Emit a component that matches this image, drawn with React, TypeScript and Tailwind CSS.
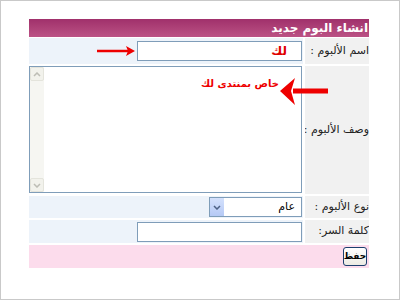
export default function App() {
  const label = "flex items-center justify-start bg-[#f1f1f1] text-[11px] text-[#222] whitespace-nowrap overflow-hidden";
  const field = "flex items-center bg-[#edf3fa] pr-[1px]";
  return (
    <div className="relative h-[300px] w-[400px] overflow-hidden border border-[#c9c9c9] bg-white font-['DejaVu_Sans',sans-serif]">
      <div dir="rtl" className="ml-[28px] mt-[18px] flex w-[340px] flex-col">
        <div className="flex h-[18px] items-center bg-gradient-to-b from-[#a0306b] to-[#bb5285] pr-[1px] text-[12px] font-bold text-white">
          انشاء البوم جديد
        </div>
        <div className="mt-[1px] grid grid-cols-[64px_1fr] gap-x-[2px] gap-y-[2px]">
          <div className={`${label} h-[26px]`}>اسم الألبوم :</div>
          <div className={field}>
            <div className="flex h-[20px] w-[165px] items-center border border-[#7f9db9] bg-white pr-[14px] text-[12px] font-bold text-[#e00000]">
              لك
            </div>
          </div>

          <div className={`${label} h-[128px]`}>وصف الألبوم :</div>
          <div className="flex bg-white pr-[1px]">
            <div dir="ltr" className="flex h-[127px] w-[273px] border border-[#7f9db9] bg-white">
              <div className="flex w-[14px] flex-col justify-between bg-[#f6f6f2]">
                <div className="flex h-[14px] items-center justify-center rounded-[2px] border border-[#e4e4dc] bg-[#f2f2ec]">
                  <svg width="8" height="5" viewBox="0 0 8 5"><path d="M1 4 L4 1 L7 4" stroke="#bdbdb5" strokeWidth="1.5" fill="none" /></svg>
                </div>
                <div className="flex h-[14px] items-center justify-center rounded-[2px] border border-[#e4e4dc] bg-[#f2f2ec]">
                  <svg width="8" height="5" viewBox="0 0 8 5"><path d="M1 1 L4 4 L7 1" stroke="#bdbdb5" strokeWidth="1.5" fill="none" /></svg>
                </div>
              </div>
              <div className="flex-1" />
            </div>
          </div>

          <div className={`${label} h-[22px]`}>نوع الألبوم :</div>
          <div className={field}>
            <div className="flex h-[20px] w-[93px] items-center justify-between border border-[#7f9db9] bg-white pr-[6px] text-[11px] text-black">
              <span>عام</span>
              <div className="flex h-[18px] w-[14px] items-center justify-center bg-gradient-to-b from-[#d4e1fc] to-[#b5c9f5]">
                <svg width="8" height="5" viewBox="0 0 8 5"><path d="M1 1 L4 4 L7 1" stroke="#4d6185" strokeWidth="1.5" fill="none" /></svg>
              </div>
            </div>
          </div>

          <div className={`${label} h-[23px]`}>كلمة السر:</div>
          <div className={field}>
            <div className="h-[20px] w-[165px] border border-[#7f9db9] bg-white" />
          </div>

          <div className="col-span-2 flex h-[23px] items-center bg-[#fcdcec] pr-[2px]">
            <div className="flex h-[19px] w-[24px] items-center justify-center overflow-hidden rounded-[3px] border border-[#1c3f6e] bg-gradient-to-b from-[#ffffff] to-[#ecebe3] text-[9px] font-bold leading-none text-black">
              حفظ
            </div>
          </div>
        </div>
      </div>

      <div dir="rtl" className="absolute left-[200px] top-[78px] text-[10px] font-bold leading-none text-[#ee0000]">
        خاص بمنتدى لك
      </div>

      <svg className="absolute left-[96px] top-[44px]" width="40" height="12" viewBox="0 0 40 12">
        <path d="M0 6 H32" stroke="#ee0000" strokeWidth="2.5" />
        <path d="M38 6 L29 1 L31 6 L29 11 Z" fill="#ee0000" />
      </svg>

      <svg className="absolute left-[278px] top-[75px]" width="52" height="32" viewBox="0 0 52 32">
        <path d="M14 15 H49" stroke="#ee0000" strokeWidth="5" />
        <path d="M1 15 L16 2 L12 15 L16 29 Z" fill="#ee0000" />
      </svg>
    </div>
  );
}
